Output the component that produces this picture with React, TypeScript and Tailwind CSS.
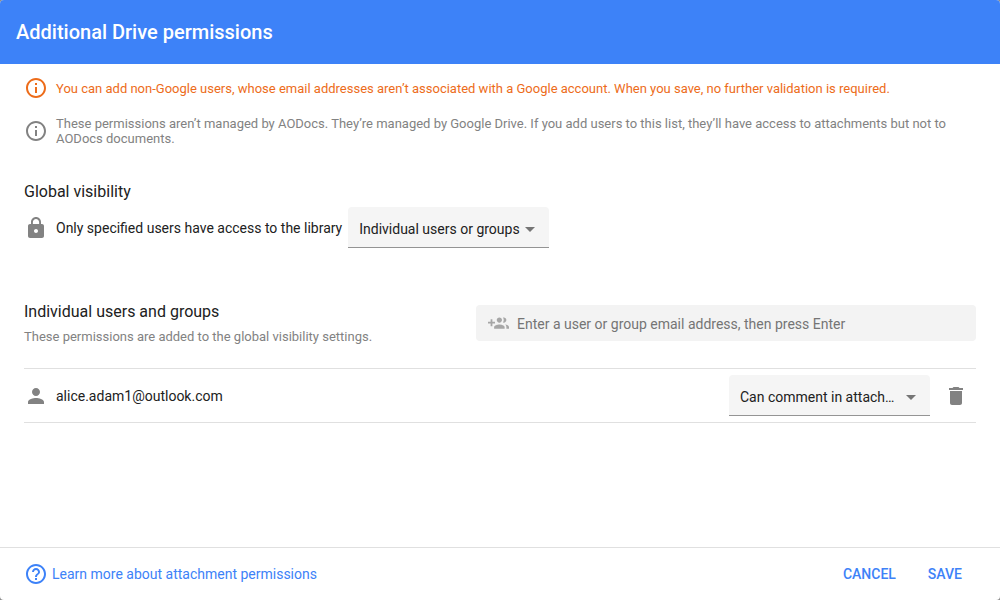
import { useState } from "react";
import { MdArrowDropDown, MdDelete, MdHelpOutline, MdInfoOutline, MdLock, MdPerson } from "react-icons/md";

interface SelectFieldProps {
  label: string;
  options: string[];
}

interface Member {
  email: string;
}

function GroupAddIcon({ className }: { className?: string }) {
  return (
    <svg viewBox="0 0 24 24" fill="currentColor" className={className} aria-hidden="true">
      <path d="M8 10H5V7H3v3H0v2h3v3h2v-3h3v-2zm10 1c1.66 0 2.99-1.34 2.99-3S19.66 5 18 5c-.32 0-.63.05-.91.14.57.81.9 1.79.9 2.86s-.34 2.04-.9 2.86c.28.09.59.14.91.14zm-5 0c1.66 0 2.99-1.34 2.99-3S14.66 5 13 5c-1.66 0-3 1.34-3 3s1.34 3 3 3zm6.62 2.16c.83.73 1.38 1.66 1.38 2.84v2h3v-2c0-1.54-2.37-2.49-4.38-2.84zM13 13c-2 0-6 1-6 3v2h12v-2c0-2-4-3-6-3z" />
    </svg>
  );
}

function SelectField({ label, options }: SelectFieldProps) {
  const [value, setValue] = useState(options[0]);

  return (
    <div className="relative w-[201px] shrink-0">
      <select
        aria-label={label}
        value={value}
        onChange={(e) => setValue(e.target.value)}
        className="block h-[41px] w-full appearance-none truncate rounded-t border-b border-[#949494] bg-[#f5f5f5] pt-1 pr-7 pl-[11px] text-sm text-[#212121] outline-none"
      >
        {options.map((option) => (
          <option key={option}>{option}</option>
        ))}
      </select>
      <MdArrowDropDown className="pointer-events-none absolute top-[10px] right-[7px] size-6 text-[#757575]" />
    </div>
  );
}

export default function App() {
  const [entry, setEntry] = useState("");
  const [members, setMembers] = useState<Member[]>([{ email: "alice.adam1@outlook.com" }]);

  const addMember = (e: React.FormEvent) => {
    e.preventDefault();
    if (!entry.trim()) return;
    setMembers([...members, { email: entry.trim() }]);
    setEntry("");
  };

  return (
    <div className="min-h-screen bg-[#8c8c8c] font-['Roboto',sans-serif] text-[#212121]">
      <div className="flex min-h-screen flex-col overflow-hidden rounded bg-white">
        {/* Header */}
        <header className="flex h-16 items-center bg-[#3d82f8] px-4">
          <h1 className="text-xl font-medium text-white">Additional Drive permissions</h1>
        </header>

        <main className="flex-1 px-6 pt-3">
          {/* Notices */}
          <div className="flex items-center gap-2 text-[#ed6c1a]">
            <MdInfoOutline className="size-6 shrink-0" />
            <p className="text-[13px] leading-[15px]">
              You can add non-Google users, whose email addresses aren’t associated with a Google account. When you
              save, no further validation is required.
            </p>
          </div>
          <div className="mt-4 flex items-center gap-2 text-[#828282]">
            <MdInfoOutline className="size-6 shrink-0" />
            <p className="text-[13px] leading-[15px]">
              These permissions aren’t managed by AODocs. They’re managed by Google Drive. If you add users to this
              list, they’ll have access to attachments but not to AODocs documents.
            </p>
          </div>

          {/* Global visibility */}
          <section className="mt-9">
            <h2 className="text-base leading-5">Global visibility</h2>
            <div className="mt-[5px] flex items-center">
              <MdLock className="mr-2 size-6 shrink-0 text-[#828282]" />
              <p className="mr-1.5 text-sm">Only specified users have access to the library</p>
              <SelectField
                label="Global visibility"
                options={["Individual users or groups", "Anyone in the domain", "Anyone with the link"]}
              />
            </div>
          </section>

          {/* Users and groups */}
          <section className="mt-13">
            <div className="flex items-start justify-between gap-6">
              <div>
                <h2 className="text-base leading-6">Individual users and groups</h2>
                <p className="mt-[3px] text-[13px] leading-5 text-[#828282]">
                  These permissions are added to the global visibility settings.
                </p>
              </div>
              <form onSubmit={addMember} className="mt-[5px] w-[500px]">
                <label className="flex h-9 items-center rounded bg-[#f3f3f3] px-3">
                  <GroupAddIcon className="mr-2 size-[21px] shrink-0 text-[#a6a6a6]" />
                  <input
                    type="text"
                    aria-label="User or group email address"
                    value={entry}
                    onChange={(e) => setEntry(e.target.value)}
                    placeholder="Enter a user or group email address, then press Enter"
                    className="w-full bg-transparent pt-0.5 text-sm outline-none placeholder:text-[#757575]"
                  />
                </label>
              </form>
            </div>

            <ul className="mt-[21px] border-t border-[#e0e0e0]">
              {members.map((member) => (
                <li key={member.email} className="flex items-center border-b border-[#e0e0e0] py-1.5">
                  <MdPerson className="mr-2 size-6 shrink-0 text-[#828282]" />
                  <span className="flex-1 text-sm">{member.email}</span>
                  <SelectField
                    label={`Permission for ${member.email}`}
                    options={["Can comment in attachments", "Can view attachments", "Can edit attachments"]}
                  />
                  <button
                    type="button"
                    aria-label={`Remove ${member.email}`}
                    onClick={() => setMembers(members.filter((m) => m !== member))}
                    className="mr-2 ml-3.5 cursor-pointer text-[#828282]"
                  >
                    <MdDelete className="size-6" />
                  </button>
                </li>
              ))}
            </ul>
          </section>
        </main>

        {/* Footer */}
        <footer className="flex h-[53px] items-center justify-between border-t border-[#e0e0e0] px-6 text-sm text-[#3d82f8]">
          <a href="#" className="flex items-center gap-1">
            <MdHelpOutline className="size-6" />
            Learn more about attachment permissions
          </a>
          <div className="mr-1.5 flex items-center gap-4">
            <button type="button" className="cursor-pointer px-2 py-1 font-medium">
              CANCEL
            </button>
            <button type="button" className="cursor-pointer px-2 py-1 font-medium">
              SAVE
            </button>
          </div>
        </footer>
      </div>
    </div>
  );
}
